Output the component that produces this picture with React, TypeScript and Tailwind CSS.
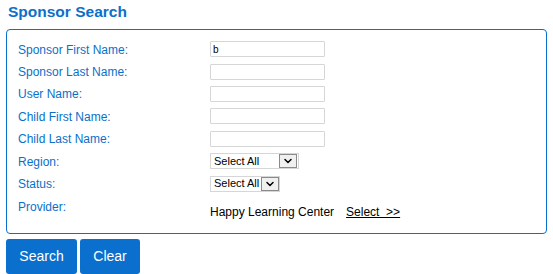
import { ChevronDown } from "lucide-react";

const textFields = [
  { label: "Sponsor First Name:", value: "b" },
  { label: "Sponsor Last Name:", value: "" },
  { label: "User Name:", value: "" },
  { label: "Child First Name:", value: "" },
  { label: "Child Last Name:", value: "" },
];

function FakeSelect({ width, gap }: { width: string; gap: string }) {
  return (
    <div className={`flex h-[16px] shrink-0 items-center whitespace-nowrap border border-[#d6d6d6] bg-white pl-[3px] ${width}`}>
      <span className="text-[11px] leading-none text-black">Select All</span>
      <span className={`flex h-[14px] w-[18px] shrink-0 items-center justify-center border border-[#8a8a8a] bg-[#f0f0f0] ${gap}`}>
        <ChevronDown className="h-[12px] w-[12px] text-black" strokeWidth={3} />
      </span>
    </div>
  );
}

export default function App() {
  return (
    <div className="w-[553px] bg-white font-['Liberation_Sans',Arial,sans-serif]">
      <h1 className="px-[8px] pt-[3px] text-[15.5px] font-bold leading-[18px] text-[#0a70c9]">Sponsor Search</h1>

      <div className="mx-[6px] mt-[8px] h-[205px] rounded-[4px] border border-[#0a70c9] px-[11px] pt-[8px]">
        {textFields.map((f) => (
          <div key={f.label} className="flex h-[22.4px] items-center">
            <span className="w-[192px] pt-[1px] text-[12px] text-[#0a70c9]">{f.label}</span>
            <input
              readOnly
              value={f.value}
              className="h-[16px] w-[115px] rounded-[1px] border border-[#d6d6d6] px-[2px] text-[10px] text-black outline-none"
            />
          </div>
        ))}
        <div className="flex h-[22.4px] items-center">
          <span className="w-[192px] pt-[1px] text-[12px] text-[#0a70c9]">Region:</span>
          <FakeSelect width="w-[89px]" gap="ml-auto mr-[1px]" />
        </div>
        <div className="flex h-[22.4px] items-center">
          <span className="w-[192px] pt-[1px] text-[12px] text-[#0a70c9]">Status:</span>
          <FakeSelect width="w-[70px]" gap="ml-[2px]" />
        </div>
        <div className="flex h-[30px] items-start pt-[3px]">
          <span className="w-[192px] text-[12px] text-[#0a70c9]">Provider:</span>
          <div className="flex items-center pt-[5px] text-[12px] text-black">
            <span>Happy Learning Center</span>
            <span className="ml-[12px] underline">Select &nbsp;&gt;&gt;</span>
          </div>
        </div>
      </div>

      <div className="flex gap-[3px] px-[6px] pt-[5px]">
        <button className="h-[35px] w-[71px] rounded-[3px] bg-[#0a6fcd] text-[14px] text-white">Search</button>
        <button className="h-[35px] w-[60px] rounded-[3px] bg-[#0a6fcd] text-[14px] text-white">Clear</button>
      </div>
    </div>
  );
}
